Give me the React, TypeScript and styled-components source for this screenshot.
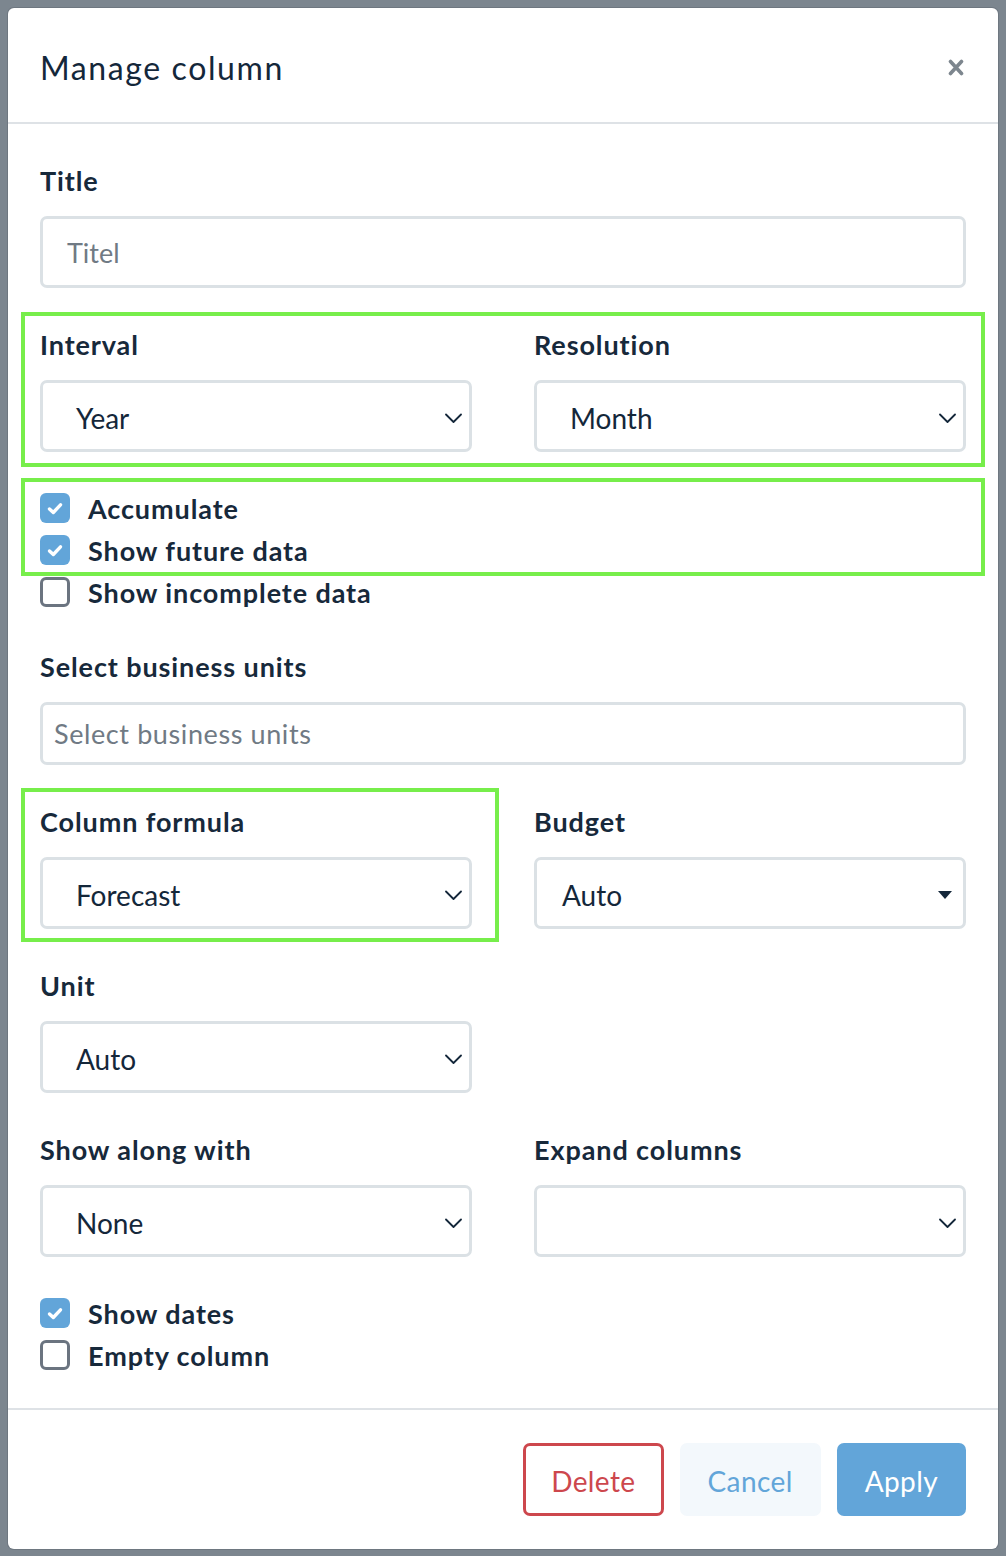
import styled, { createGlobalStyle } from 'styled-components';

const GlobalStyle = createGlobalStyle`
  html, body {
    margin: 0;
    padding: 0;
    background: #7c868f;
  }
  body {
    font-family: Lato, "Open Sans", sans-serif;
    color: #17293b;
  }
`;

const Backdrop = styled.div`
  padding: 8px;
  min-height: 1556px;
  box-sizing: border-box;
`;

const Modal = styled.div`
  background: #fff;
  border-radius: 6px;
  box-shadow: 0 0 0 1px #6e7780;
  overflow: hidden;
`;

const Header = styled.div`
  height: 116px;
  padding: 4px 34px 0 32px;
  box-sizing: border-box;
  display: flex;
  align-items: center;
  justify-content: space-between;
  border-bottom: 2px solid #dee2e6;
`;

const HeaderTitle = styled.h2`
  margin: 0;
  font-size: 32px;
  letter-spacing: 1.6px;
  font-weight: 400;
  color: #14273a;
`;

const CloseBtn = styled.button`
  border: 0;
  background: none;
  padding: 0;
  display: flex;
  cursor: pointer;
`;

const Body = styled.div`
  padding: 42px 32px 32px;
  display: flex;
  flex-direction: column;
  gap: 42px;
`;

const Field = styled.div`
  display: flex;
  flex-direction: column;
  gap: 20px;
  min-width: 0;
`;

const Label = styled.label`
  font-size: 27px;
  letter-spacing: 0.9px;
  line-height: 30px;
  font-weight: 700;
  color: #17293b;
  white-space: nowrap;
`;

const Row = styled.div`
  display: grid;
  grid-template-columns: 1fr 1fr;
  column-gap: 62px;
`;

interface MarkProps {
  $inset: string;
}

// green review frames drawn over the form
const Highlight = styled.div<MarkProps>`
  position: relative;
  &::after {
    content: '';
    position: absolute;
    inset: ${(p) => p.$inset};
    border: 4px solid #77ee4b;
    pointer-events: none;
  }
`;

interface BoxProps {
  $height?: number;
  $pad?: number;
  $spacing?: number;
}

const TextInput = styled.div<BoxProps>`
  height: ${(p) => p.$height || 72}px;
  box-sizing: border-box;
  border: 3px solid #dbe1e5;
  border-radius: 7px;
  padding-left: ${(p) => p.$pad || 24}px;
  display: flex;
  align-items: center;
  font-size: 27px;
  letter-spacing: ${(p) => p.$spacing || 0}px;
  color: #707a84;
`;

const Select = styled.div<BoxProps>`
  height: 72px;
  box-sizing: border-box;
  border: 3px solid #dbe1e5;
  border-radius: 7px;
  padding: 4px 7px 0 ${(p) => p.$pad || 33}px;
  display: flex;
  align-items: center;
  justify-content: space-between;
  font-size: 28px;
  color: #14273a;
`;

const CheckList = styled.div<{ $after?: number }>`
  display: flex;
  flex-direction: column;
  margin: -7px 0 ${(p) => p.$after || 0}px;
`;

const CheckRow = styled.div`
  height: 42px;
  display: flex;
  align-items: center;
  gap: 18px;
  font-size: 27px;
  letter-spacing: 0.9px;
  font-weight: 700;
  color: #17293b;
`;

const Box = styled.span<{ $on?: boolean }>`
  width: 30px;
  height: 30px;
  flex: none;
  box-sizing: border-box;
  border-radius: 6px;
  display: flex;
  align-items: center;
  justify-content: center;
  background: ${(p) => (p.$on ? '#62a5d9' : '#fff')};
  border: ${(p) => (p.$on ? 'none' : '3px solid #6b7480')};
`;

const Footer = styled.div`
  border-top: 2px solid #dee2e6;
  padding: 33px 32px;
  display: flex;
  justify-content: flex-end;
  gap: 16px;
`;

type Tone = 'danger' | 'light' | 'primary';

const Button = styled.button<{ $tone: Tone }>`
  height: 73px;
  box-sizing: border-box;
  padding: 2px ${(p) => (p.$tone === 'danger' ? 25 : 28)}px 0;
  border-radius: 7px;
  font-family: inherit;
  font-size: 28px;
  letter-spacing: 0.4px;
  cursor: pointer;
  border: ${(p) => (p.$tone === 'danger' ? '3px solid #cd474d' : 'none')};
  background: ${(p) => (p.$tone === 'primary' ? '#62a5d9' : p.$tone === 'light' ? '#f3f8fc' : '#fff')};
  color: ${(p) => (p.$tone === 'primary' ? '#fff' : p.$tone === 'light' ? '#62a5d9' : '#cd474d')};
`;

const Chevron = () => (
  <svg width="17" height="10" viewBox="0 0 17 10" fill="none">
    <path d="M1 1.5l7.5 7.5 7.5-7.5" stroke="#14273a" strokeWidth="1.8" strokeLinecap="round" strokeLinejoin="round" />
  </svg>
);

const Caret = () => (
  <svg width="14" height="8" viewBox="0 0 14 8" style={{ marginRight: 4 }}>
    <path d="M0 0h14L7 8z" fill="#14273a" />
  </svg>
);

const Check = () => (
  <svg width="16" height="13" viewBox="0 0 16 13" fill="none">
    <path d="M2.5 7l3.8 3.5L13.5 2.8" stroke="#fff" strokeWidth="3.4" strokeLinecap="round" strokeLinejoin="round" />
  </svg>
);

const CheckItem = ({ on, label }: { on?: boolean; label: string }) => (
  <CheckRow>
    <Box $on={on}>{on && <Check />}</Box>
    {label}
  </CheckRow>
);

const SelectField = ({ label, value }: { label: string; value: string }) => (
  <Field>
    <Label>{label}</Label>
    <Select>
      <span>{value}</span>
      <Chevron />
    </Select>
  </Field>
);

export default function App() {
  return (
    <>
      <GlobalStyle />
      <Backdrop>
        <Modal>
          <Header>
            <HeaderTitle>Manage column</HeaderTitle>
            <CloseBtn aria-label="Close">
              <svg width="16" height="17" viewBox="0 0 16 17">
                <path d="M2.5 2.5l11 12M13.5 2.5l-11 12" stroke="#7d868e" strokeWidth="3.6" strokeLinecap="round" />
              </svg>
            </CloseBtn>
          </Header>

          <Body>
            <Field>
              <Label>Title</Label>
              <TextInput>Titel</TextInput>
            </Field>

            <Highlight $inset="-18px -19px -15px -19px">
              <Row>
                <SelectField label="Interval" value="Year" />
                <SelectField label="Resolution" value="Month" />
              </Row>
            </Highlight>

            <CheckList $after={-3}>
              <Highlight $inset="-9px -19px -5px -19px">
                <CheckItem on label="Accumulate" />
                <CheckItem on label="Show future data" />
              </Highlight>
              <CheckItem label="Show incomplete data" />
            </CheckList>

            <Field>
              <Label>Select business units</Label>
              <TextInput $height={63} $pad={11} $spacing={0.6}>Select business units</TextInput>
            </Field>

            <Row>
              <Highlight $inset="-19px -27px -13px -19px">
                <SelectField label="Column formula" value="Forecast" />
              </Highlight>
              <Field>
                <Label>Budget</Label>
                <Select $pad={25}>
                  <span>Auto</span>
                  <Caret />
                </Select>
              </Field>
            </Row>

            <Row>
              <SelectField label="Unit" value="Auto" />
            </Row>

            <Row>
              <SelectField label="Show along with" value="None" />
              <SelectField label="Expand columns" value="" />
            </Row>

            <CheckList>
              <CheckItem on label="Show dates" />
              <CheckItem label="Empty column" />
            </CheckList>
          </Body>

          <Footer>
            <Button $tone="danger">Delete</Button>
            <Button $tone="light">Cancel</Button>
            <Button $tone="primary">Apply</Button>
          </Footer>
        </Modal>
      </Backdrop>
    </>
  );
}
